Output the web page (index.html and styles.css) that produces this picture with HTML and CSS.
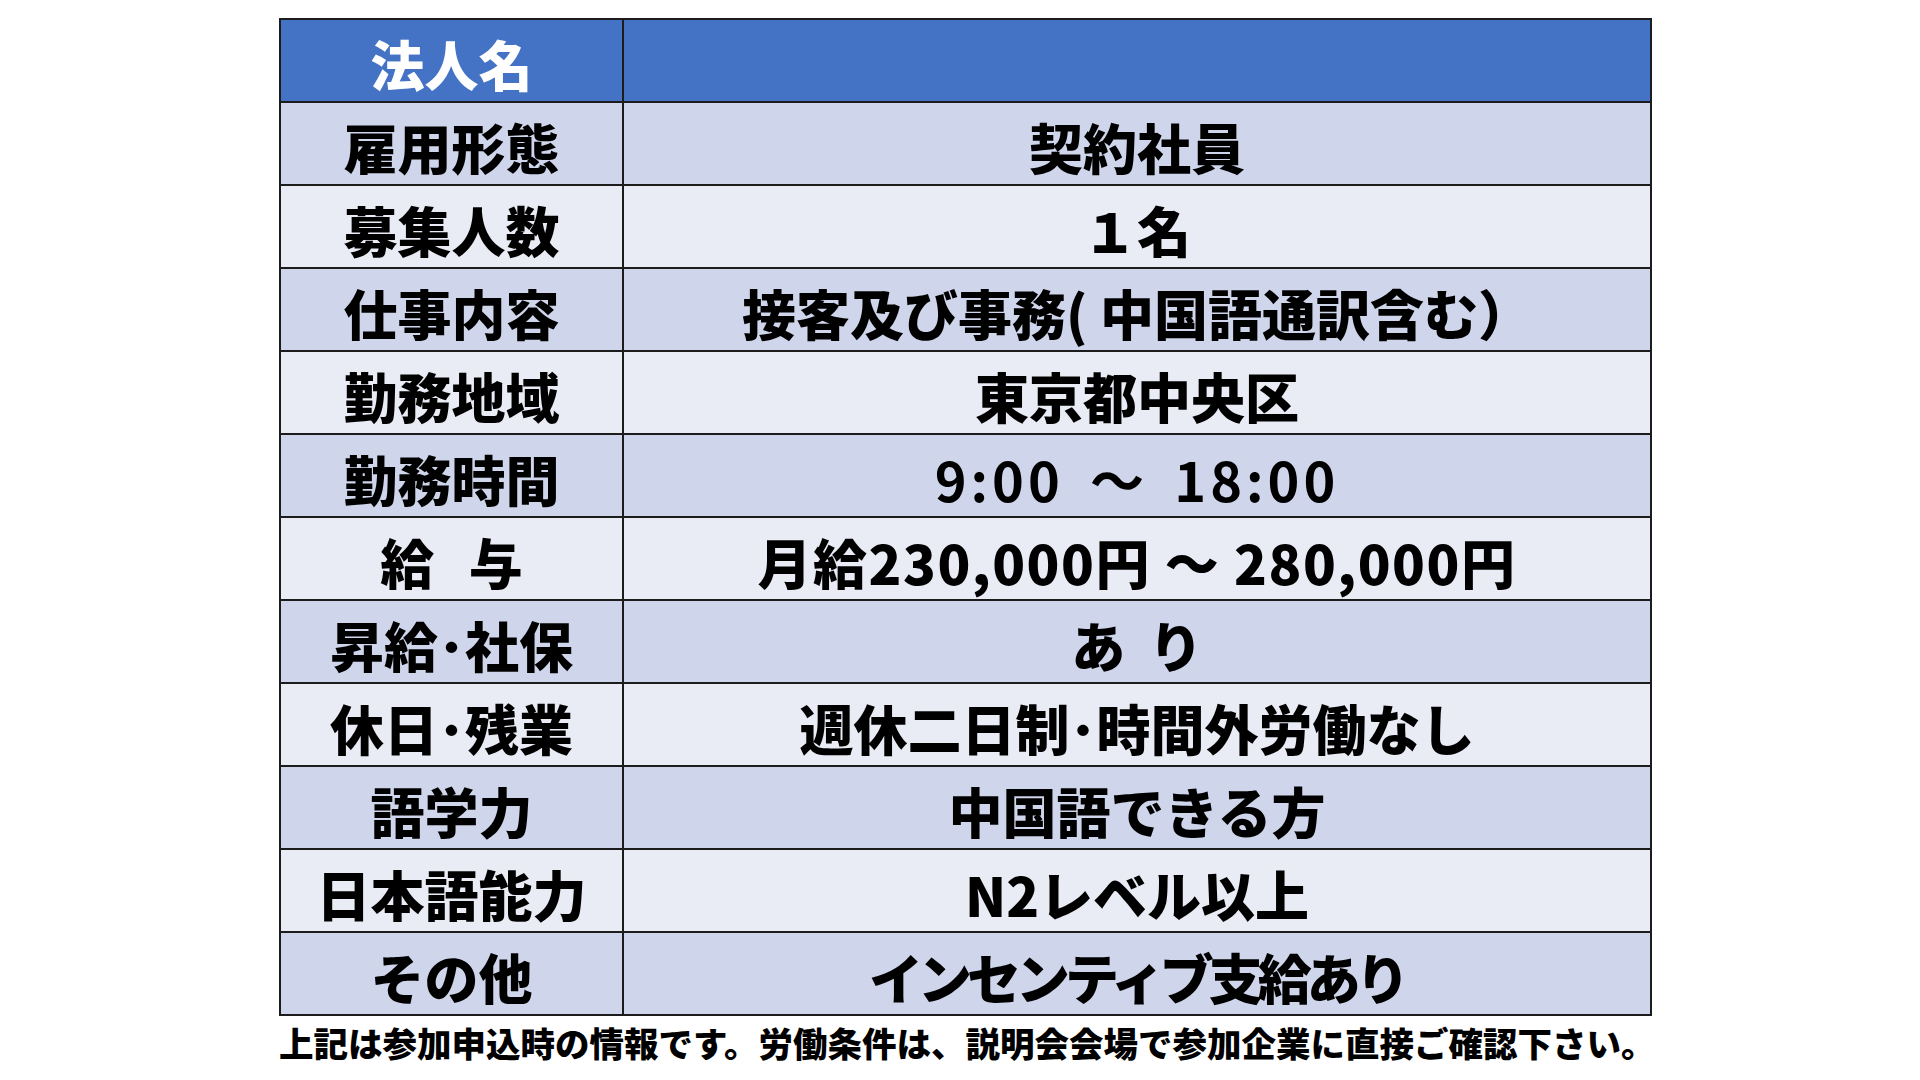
FILE: index.html
```html
<!DOCTYPE html>
<html lang="ja">
<head>
<meta charset="utf-8">
<title>求人情報</title>
<link rel="stylesheet" href="styles.css">
</head>
<body>
<main class="page">
  <table class="job">
    <tr class="head"><th>法人名</th><td></td></tr>
    <tr class="odd"><th>雇用形態</th><td>契約社員</td></tr>
    <tr class="even"><th>募集人数</th><td>１名</td></tr>
    <tr class="odd"><th>仕事内容</th><td>接客及び事務( 中国語通訳含む）</td></tr>
    <tr class="even"><th>勤務地域</th><td>東京都中央区</td></tr>
    <tr class="odd"><th>勤務時間</th><td class="time">9:00 ～ 18:00</td></tr>
    <tr class="even"><th class="wide">給 与</th><td class="pay">月給230,000円 ～ 280,000円</td></tr>
    <tr class="odd"><th>昇給･社保</th><td class="mid">あ り</td></tr>
    <tr class="even"><th>休日･残業</th><td>週休二日制･時間外労働なし</td></tr>
    <tr class="odd"><th>語学力</th><td>中国語できる方</td></tr>
    <tr class="even"><th>日本語能力</th><td>N2レベル以上</td></tr>
    <tr class="odd"><th>その他</th><td class="kana">インセンティブ支給あり</td></tr>
  </table>
  <p class="note">上記は参加申込時の情報です。労働条件は、説明会会場で参加企業に直接ご確認下さい。</p>
</main>
</body>
</html>
```

FILE: styles.css
```css
html, body {
  margin: 0;
  padding: 0;
  background: #ffffff;
}

body {
  width: 1920px;
  height: 1080px;
  overflow: hidden;
  font-family: "Noto Sans CJK JP", "Noto Sans", sans-serif;
  color: #000000;
}

.page {
  padding: 18px 0 0 279px;
}

.job {
  border-collapse: collapse;
  width: 1373px;
  table-layout: fixed;
}

.job tr {
  height: 83px;
}

.job th,
.job td {
  border: 2px solid #1c1c1c;
  padding: 6px 0 0 0;
  text-align: center;
  vertical-align: middle;
  font-size: 54px;
  font-weight: 900;
  line-height: 1;
  white-space: nowrap;
}

.job th {
  width: 341px;
}

.job .head th,
.job .head td {
  background: #4472c4;
  color: #ffffff;
}

.job .odd th,
.job .odd td {
  background: #cfd5ea;
}

.job .even th,
.job .even td {
  background: #e9ebf5;
}

.job .time {
  font-weight: 700;
  letter-spacing: 4px;
  word-spacing: 10px;
}

.job .pay {
  letter-spacing: 1.5px;
}

.job .wide {
  word-spacing: 22px;
}

.job .mid {
  word-spacing: 11px;
}

.job .kana {
  letter-spacing: -5px;
}

.note {
  margin: 8px 0 0 0;
  font-size: 34.5px;
  font-weight: 900;
  line-height: 1.1;
  white-space: nowrap;
}
```
